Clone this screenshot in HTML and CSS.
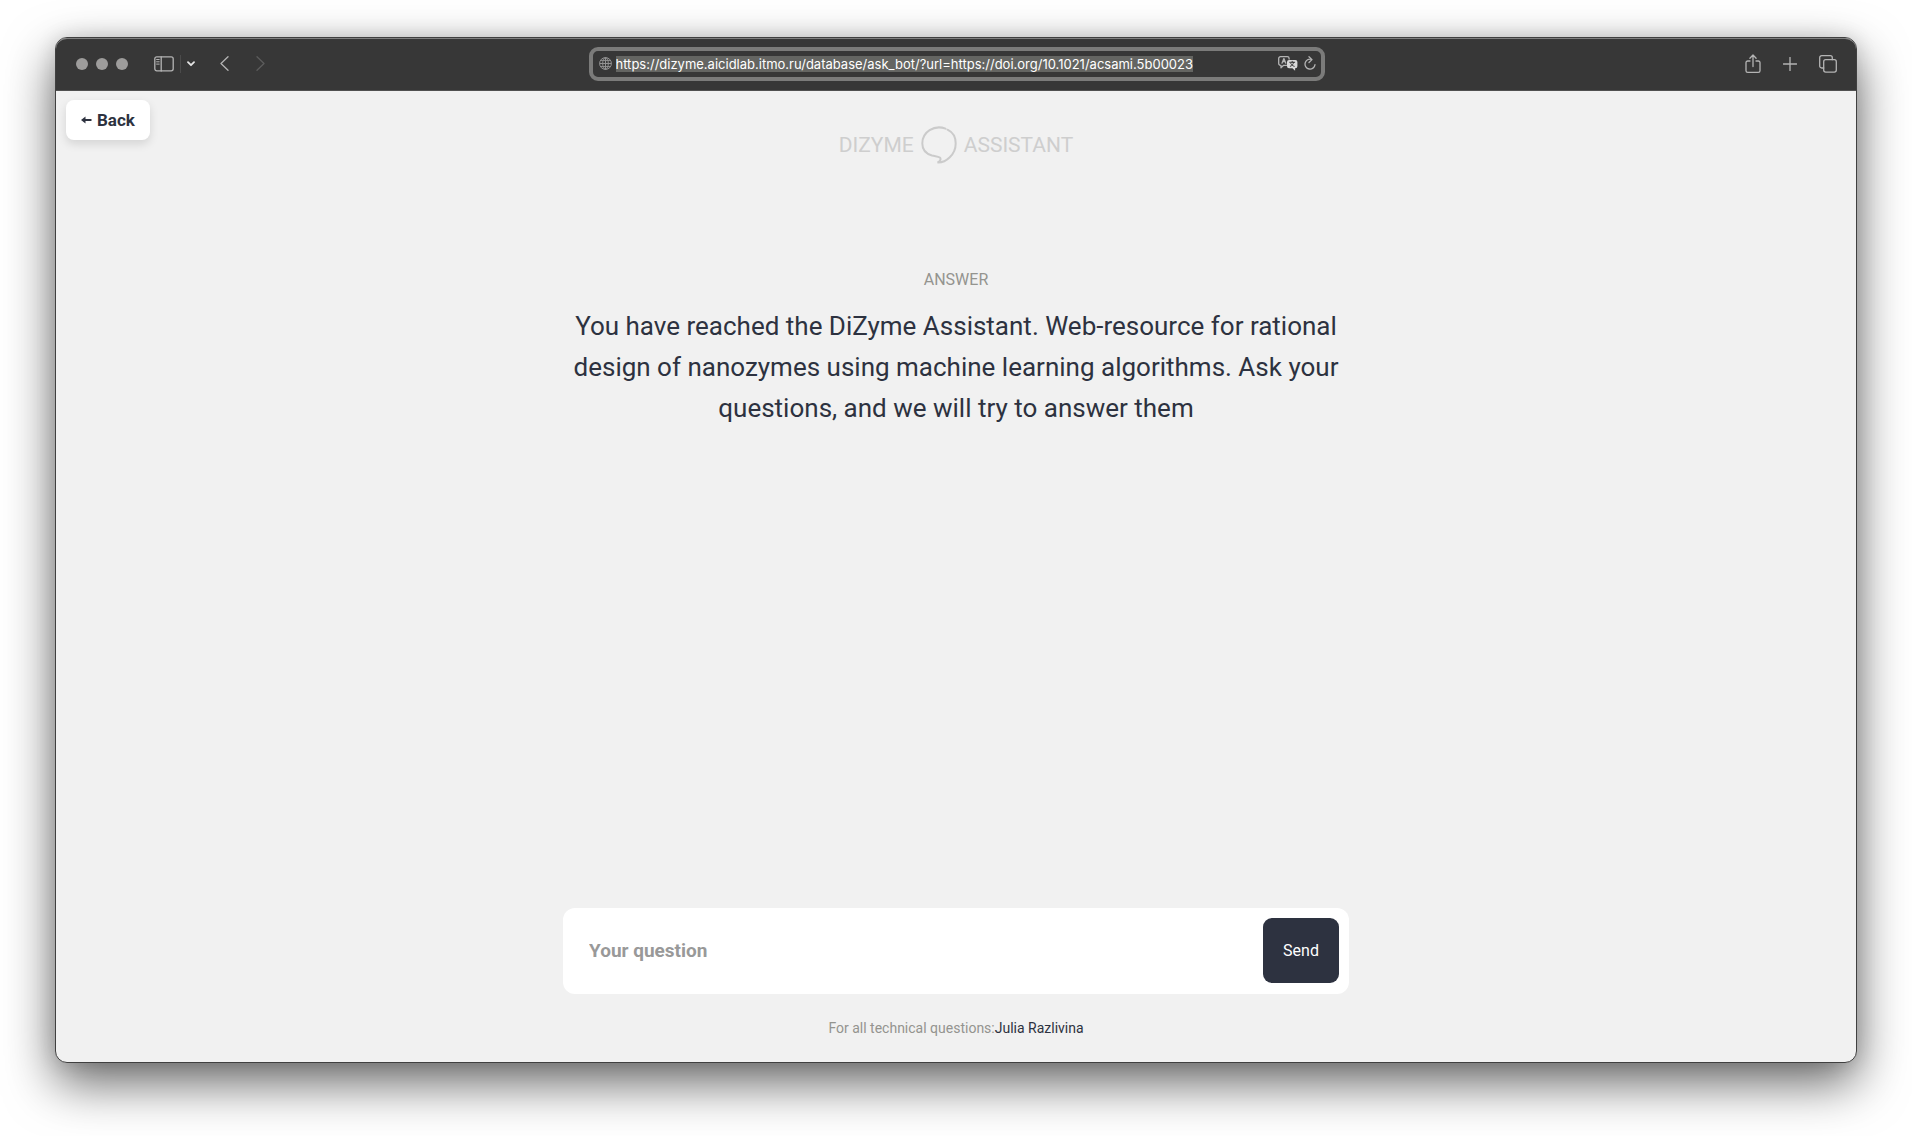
FILE: index.html
```html
<!DOCTYPE html>
<html lang="en">
<head>
<meta charset="utf-8">
<title>DiZyme Assistant</title>
<link rel="stylesheet" href="styles.css">
</head>
<body>
<div class="window">
  <header class="toolbar">
    <div class="toolbar-side">
      <div class="lights"><span class="light"></span><span class="light"></span><span class="light"></span></div>
      <div class="sidebar-group">
        <button class="tool" aria-label="Show sidebar"><svg width="20" height="16" viewBox="0 0 20 16"><rect x="0.8" y="0.8" width="18.4" height="14" rx="2"/><path d="M7.2 1v14"/><path class="fine" d="M2.6 3.5h2.6M2.6 5.8h2.6M2.6 8.1h2.6"/></svg></button>
        <span class="divider"></span>
        <button class="tool strong" aria-label="Tab groups"><svg width="8" height="6" viewBox="0 0 8 6"><path d="M1 1.2l3 3 3-3"/></svg></button>
      </div>
      <div class="history">
        <button class="tool" aria-label="Back"><svg width="9" height="15" viewBox="0 0 9 15"><path d="M8 0.8L1 7.5l7 6.7"/></svg></button>
        <button class="tool faded" aria-label="Forward" disabled><svg width="9" height="15" viewBox="0 0 9 15"><path d="M1 0.8l7 6.7-7 6.7"/></svg></button>
      </div>
    </div>
    <div class="address">
      <svg class="globe" width="13" height="13" viewBox="0 0 13 13"><circle cx="6.5" cy="6.5" r="5.9"/><ellipse cx="6.5" cy="6.5" rx="2.8" ry="5.9"/><path d="M6.5 0.6v11.8M0.6 6.5h11.8M1.6 3.4h9.8M1.6 9.6h9.8"/></svg>
      <input class="url" type="text" aria-label="Address" value="https://dizyme.aicidlab.itmo.ru/database/ask_bot/?url=https://doi.org/10.1021/acsami.5b00023">
      <div class="address-tools">
        <button class="tool" aria-label="Translate"><svg width="20" height="15" viewBox="0 0 20 15"><path d="M8.6 9.3H5.6L3 11.8V9.3H2.5a1.8 1.8 0 0 1-1.8-1.8V2.5A1.8 1.8 0 0 1 2.5 0.7h6.8a1.8 1.8 0 0 1 1.8 1.8V3"/><path d="M4 7.2l1.9-4.6 1.9 4.6M4.7 5.7h2.4"/><path class="solid" d="M11 4h6.4a2 2 0 0 1 2 2v4.200a2 2 0 0 1-2 2h-.3v2.500l-2.700-2.500H11a2 2 0 0 1-2-2V6a2 2 0 0 1 2-2z"/><path class="cut" d="M11.700 6.300h5M14.200 5.300v1M12.300 10.300c2-.8 3-2 3.300-4M12.800 7.500c.8 1.500 1.800 2.300 3.400 2.800"/></svg></button>
        <button class="tool" aria-label="Reload"><svg width="12" height="15" viewBox="0 0 12 15"><path d="M7.500 3.300A5 5 0 1 0 11 8.700M5 0.700l3 2.900-3 2.900"/></svg></button>
      </div>
    </div>
    <div class="toolbar-side end">
      <button class="tool" aria-label="Share"><svg width="16" height="20" viewBox="0 0 16 20"><path d="M5 7H2.700A1.700 1.700 0 0 0 1 8.700v8A1.700 1.700 0 0 0 2.700 18.400h10.600a1.700 1.700 0 0 0 1.700-1.700v-8A1.700 1.700 0 0 0 13.300 7H11M8 12.500V1.200M4.900 4.200L8 1l3.100 3.200"/></svg></button>
      <button class="tool" aria-label="New tab"><svg width="14" height="14" viewBox="0 0 14 14"><path d="M7 0.300v13.400M0.300 7h13.400"/></svg></button>
      <button class="tool" aria-label="Show tabs"><svg width="18" height="18" viewBox="0 0 18 18"><rect x="4.700" y="4.700" width="12.600" height="12.400" rx="2"/><path d="M4.700 13H2.700a2 2 0 0 1-2-2V2.700a2 2 0 0 1 2-2h8.600a2 2 0 0 1 2 2v2"/></svg></button>
    </div>
  </header>
  <main class="page">
    <a class="back" href="#"><svg width="11" height="8" viewBox="0 0 11 8"><path d="M10.500 4H3"/><path class="head" d="M0 4l4.500-3.600v7.200z"/></svg>Back</a>
    <div class="logo">
      <span>DIZYME</span>
      <svg width="36" height="38" viewBox="0 0 36 38"><path d="M24.500 2.600C13-1.500 1.300 6 1.300 17.500c0 6.500 4.500 10.500 9.700 12 3.500.9 6 .7 7.800 2 1.500 1.200.6 4-2.300 5 8.500.5 18.200-8 18.200-19 0-6-3-11.300-8.200-13.800"/></svg>
      <span>ASSISTANT</span>
    </div>
    <section class="answer">
      <h2>ANSWER</h2>
      <p>You have reached the DiZyme Assistant. Web-resource for rational design of nanozymes using machine learning algorithms. Ask your questions, and we will try to answer them</p>
    </section>
    <form class="ask">
      <input type="text" placeholder="Your question" aria-label="Your question">
      <button type="button">Send</button>
    </form>
    <footer class="contact">For all technical questions:<a href="#">Julia Razlivina</a></footer>
  </main>
</div>
</body>
</html>
```

FILE: styles.css
```css
* { box-sizing: border-box; }

body {
  margin: 0;
  min-height: 100vh;
  padding: 37px 55px 73px;
  display: flex;
  background: #fff;
  font-family: Roboto, sans-serif;
  color: #2d3240;
}

button { font: inherit; border: 0; padding: 0; background: none; }
a { color: inherit; text-decoration: none; }

.window {
  flex: 1;
  display: flex;
  flex-direction: column;
  border: 1px solid #404040;
  border-radius: 12px;
  background: #f1f1f1;
  box-shadow: 0 20px 50px rgba(0, 0, 0, 0.6), 0 0 20px rgba(0, 0, 0, 0.12);
}

/* Browser toolbar */
.toolbar {
  display: grid;
  grid-template-columns: 1fr minmax(0, 736px) 1fr;
  align-items: center;
  height: 53px;
  padding: 0 19px 2px 20px;
  background: #373737;
  border-top: 1px solid #808080;
  border-bottom: 1px solid #505050;
  border-radius: 11px 11px 0 0;
}
.toolbar-side { display: flex; align-items: center; }
.toolbar-side.end { justify-content: flex-end; gap: 22px; }
.lights { display: flex; gap: 8px; }
.light { width: 12px; height: 12px; border-radius: 50%; background: #9d9c9b; }
.sidebar-group { display: flex; align-items: center; gap: 6px; margin-left: 26px; }
.divider { width: 1px; height: 18px; background: #4b4b4b; }
.history { display: flex; gap: 27px; margin-left: 25px; }

.tool { display: flex; color: #b4b4b4; }
.tool.strong { color: #e4e4e4; }
.tool.faded { color: #5c5c5c; }
.tool svg {
  fill: none;
  stroke: currentColor;
  stroke-width: 1.3;
  stroke-linecap: round;
  stroke-linejoin: round;
}
.tool.strong svg { stroke-width: 1.8; }
.tool .fine { stroke-width: 1; }
.tool .solid { fill: #d8d8d8; stroke: none; }
.tool .cut { stroke: #373737; stroke-width: 1; }

.address {
  display: flex;
  align-items: center;
  height: 34px;
  padding: 0 5px 0 6px;
  border: 4px solid #7b7b7a;
  border-radius: 9px;
}
.globe { flex: none; margin-right: 4px; fill: none; stroke: #929292; stroke-width: 1; }
.url {
  field-sizing: content;
  min-width: 0;
  height: 16px;
  padding: 0;
  border: 0;
  background: #646562;
  color: #fff;
  font: 400 13px/16px Inter, sans-serif;
}
.address-tools { display: flex; align-items: center; gap: 6px; margin-left: auto; }

/* Assistant page */
.page {
  position: relative;
  flex: 1;
  display: flex;
  flex-direction: column;
  align-items: center;
  padding: 34px 24px 24px;
}
.back {
  position: absolute;
  top: 9px;
  left: 10px;
  display: flex;
  align-items: center;
  gap: 5px;
  padding: 10px 15px;
  border-radius: 8px;
  background: #fff;
  box-shadow: 0 4px 10px rgba(0, 0, 0, 0.12);
  font-size: 17px;
  line-height: 20px;
  font-weight: 700;
}
.back svg { stroke: currentColor; stroke-width: 2; }
.back .head { fill: currentColor; stroke: none; }
.logo {
  display: flex;
  align-items: center;
  gap: 7px;
  height: 40px;
  color: #cecece;
  font-size: 21px;
}
.logo svg { fill: none; stroke: #cbcbcb; stroke-width: 2; stroke-linecap: round; }

.answer { max-width: 786px; margin-top: 105px; text-align: center; }
.answer h2 {
  margin: 0 0 16px;
  color: #94948f;
  font-size: 16px;
  line-height: 20px;
  font-weight: 400;
}
.answer p { margin: 0; font-size: 26px; line-height: 41px; }

.ask {
  display: flex;
  width: 100%;
  max-width: 786px;
  height: 86px;
  margin-top: auto;
  padding: 10px 10px 11px;
  border-radius: 12px;
  background: #fff;
}
.ask input {
  flex: 1;
  min-width: 0;
  padding: 0 16px;
  border: 0;
  background: none;
  font: 700 19px/24px Roboto, sans-serif;
}
.ask input::placeholder { color: #999; opacity: 1; }
.ask button {
  width: 76px;
  border-radius: 9px;
  background: #2d3240;
  color: #fff;
  font-size: 16px;
}
.contact { margin-top: 24px; color: #94948f; font-size: 14px; line-height: 20px; }
.contact a { color: #2d3240; }
```
